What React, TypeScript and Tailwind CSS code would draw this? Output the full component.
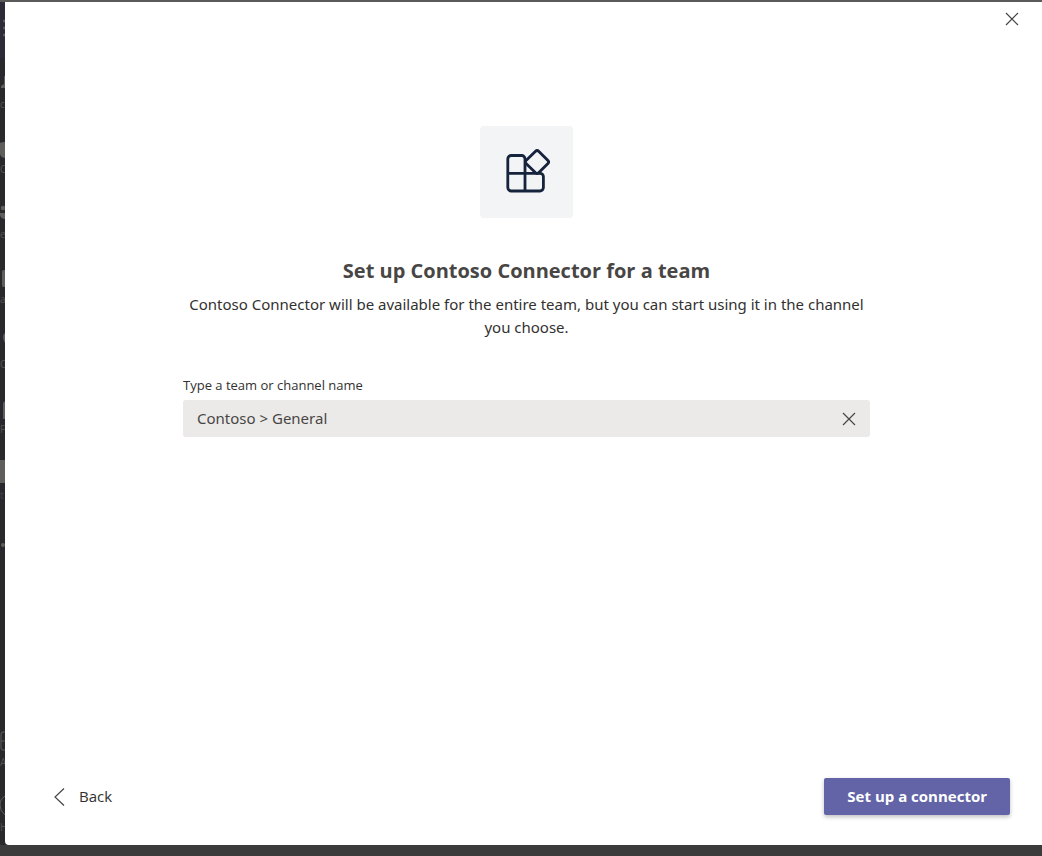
import { useState } from "react";
import type { ReactNode } from "react";

function CloseIcon() {
  return (
    <svg viewBox="0 0 14 14" className="size-[14px]" fill="none" stroke="#484644" strokeWidth="1.2" aria-hidden="true">
      <path d="M1 1 13 13M13 1 1 13" />
    </svg>
  );
}

function AppIcon() {
  return (
    <svg viewBox="0 0 46 46" className="size-[46px]" fill="none" stroke="#16233d" strokeWidth="2.8" strokeLinejoin="round" aria-hidden="true">
      <path d="M21 24.3V9.9A3.4 3.4 0 0 0 17.6 6.5H7.2A3.4 3.4 0 0 0 3.8 9.9V38.6A3.4 3.4 0 0 0 7.2 42H36A3.4 3.4 0 0 0 39.4 38.6V27.7A3.4 3.4 0 0 0 36 24.3H3.8M21 23V42" />
      <path d="M31.3 2.4 22.3 11.2Q20.4 13 22.3 14.8L31.3 23.6Q33.1 25.4 34.9 23.6L43.7 14.8Q45.5 13 43.7 11.2L34.9 2.4Q33.1 .6 31.3 2.4Z" />
    </svg>
  );
}

function RailItem({ label, children }: { label: string; children: ReactNode }) {
  return (
    <div className="h-[65px] shrink-0 overflow-hidden pt-3">
      <svg viewBox="0 0 5 24" className="block h-6 w-[5px]" fill="#605e5c" aria-hidden="true">
        {children}
      </svg>
      <span className="flex text-[10px] leading-4 text-[#55534f]">{label}</span>
    </div>
  );
}

function Rail() {
  return (
    <nav aria-label="Apps" className="flex w-[5px] shrink-0 flex-col overflow-hidden bg-[#29282d]">
      <div className="h-[56px] shrink-0 bg-[#2d2b38] pt-4">
        <svg viewBox="0 0 5 20" className="block h-5 w-[5px]" fill="#605e5c" aria-hidden="true">
          <circle cx="4.5" cy="3" r="1.5" />
          <circle cx="4.5" cy="10" r="1.5" />
          <circle cx="4.5" cy="17" r="1.5" />
        </svg>
      </div>
      <div className="flex flex-1 flex-col pt-[2px]">
        <RailItem label="c"><path d="M4 4H5V16H1V14L4 12Z" /></RailItem>
        <RailItem label="C"><path d="M0 6Q1 5 5 5V21Q1 21 0 17Z" /></RailItem>
        <RailItem label="e"><circle cx="3" cy="6" r="2.3" /><path d="M0 11H5V17Q1 17 0 13Z" /></RailItem>
        <RailItem label="al"><path d="M4 3H5V20H3Q2 20 2 18V5Q2 3 4 3Z" /></RailItem>
        <RailItem label="C"><path d="M5 1V11Q3 8 3 5 3 2 5 1Z" /></RailItem>
        <RailItem label="F"><path d="M3 6 5 4V22H3Z" /></RailItem>
        <div className="flex h-[65px] shrink-0 flex-col pt-[10px]">
          <span className="h-[23px] bg-[#605e5c]" />
          <span className="flex text-[10px] leading-6 text-[#44424a]">t</span>
        </div>
        <RailItem label=""><circle cx="3" cy="18" r="2" /></RailItem>
        <div className="-mb-[3px] mt-auto">
          <RailItem label="A"><path d="M5 2H3Q1 2 1 4V18Q1 20 3 20H5M1 11H5" fill="none" stroke="#605e5c" /></RailItem>
          <RailItem label="H"><path d="M5 1Q0 4 0 10T5 20" fill="none" stroke="#605e5c" /></RailItem>
        </div>
      </div>
    </nav>
  );
}

export default function App() {
  const [channel, setChannel] = useState("Contoso > General");

  return (
    <div className="flex min-h-screen flex-col bg-[#3b3b3b] pb-[11px] font-['Open_Sans',sans-serif] text-[#323130]">
      <div className="h-[2px] bg-[#5a5a5a]" />
      <div className="flex flex-1 bg-[#29282d]">
        <Rail />
        <section role="dialog" aria-labelledby="dialog-title" className="flex flex-1 flex-col rounded-bl-sm bg-white pl-[6px]">
          <header className="flex justify-end px-[23px] pt-[10px]">
            <button type="button" aria-label="Close" className="flex size-[14px] items-center justify-center">
              <CloseIcon />
            </button>
          </header>

          <main className="mx-auto flex w-full max-w-[687px] flex-1 flex-col items-center pt-[100px]">
            <div className="flex h-[92px] w-[93px] items-center justify-center rounded bg-[#f3f4f6]">
              <AppIcon />
            </div>
            <h1 id="dialog-title" className="mt-[39px] text-center text-xl leading-7 font-bold text-[#484644]">
              Set up Contoso Connector for a team
            </h1>
            <p className="mt-2 text-center font-['Noto_Sans',sans-serif] text-[15px] leading-[23px]">
              Contoso Connector will be available for the entire team, but you can start using it in the channel you choose.
            </p>
            <label htmlFor="channel" className="mt-9 self-start text-[13px] leading-5">
              Type a team or channel name
            </label>
            <div className="mt-[5px] flex h-[37px] w-full items-center rounded-[3px] bg-[#ebeae9] px-[14px]">
              <input
                id="channel"
                type="text"
                value={channel}
                onChange={(event) => setChannel(event.target.value)}
                className="min-w-0 flex-1 bg-transparent font-['Noto_Sans',sans-serif] text-[15px] text-[#484644] outline-none"
              />
              <button type="button" aria-label="Clear" onClick={() => setChannel("")}>
                <CloseIcon />
              </button>
            </div>
          </main>

          <footer className="flex items-center justify-between pr-8 pb-[30px] pl-[42px]">
            <button type="button" className="flex items-center gap-3 text-[15px]">
              <svg viewBox="0 0 14 20" className="h-5 w-[14px]" fill="none" stroke="#484644" strokeWidth="1.2" aria-hidden="true">
                <path d="M11 1.5 2 10 11 18.5" />
              </svg>
              Back
            </button>
            <button type="button" className="h-[37px] rounded-xs bg-[#6264a7] px-[23px] text-[15px] font-bold text-white shadow-[0_2px_4px_rgba(0,0,0,0.25)]">
              Set up a connector
            </button>
          </footer>
        </section>
      </div>
    </div>
  );
}
